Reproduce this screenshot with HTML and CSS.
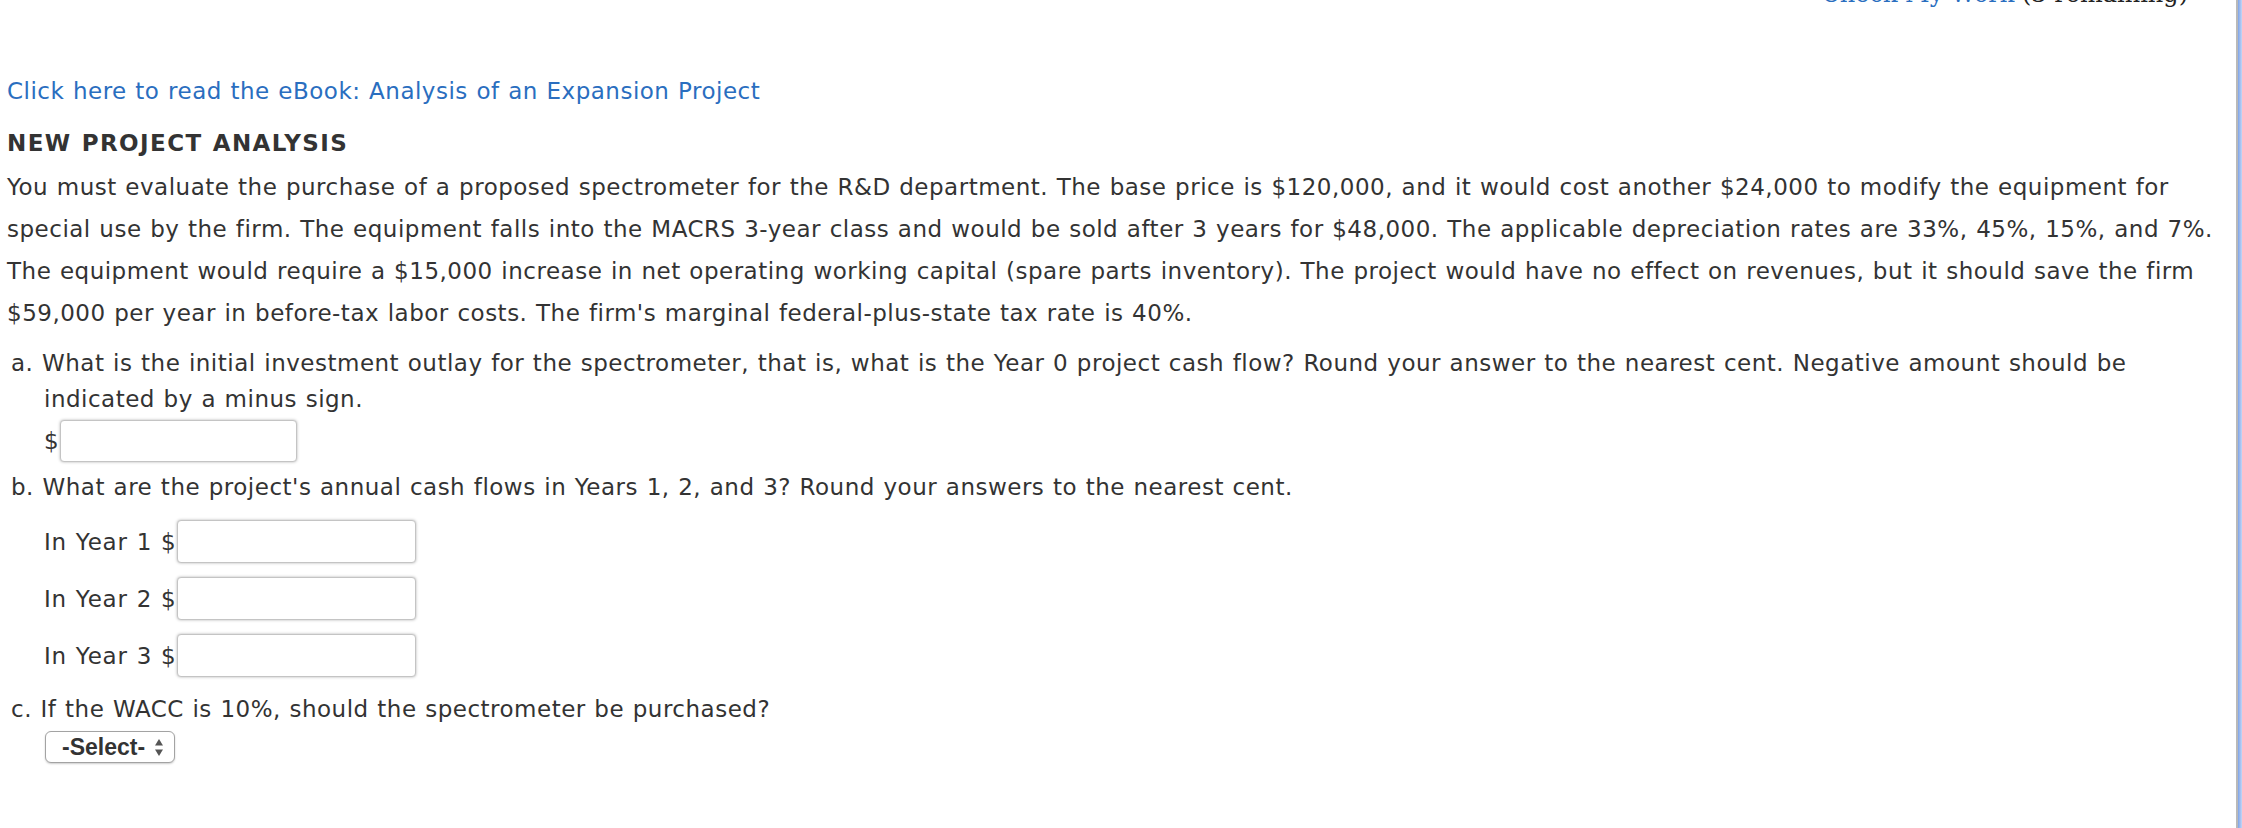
FILE: index.html
```html
<!DOCTYPE html>
<html lang="en">
<head>
<meta charset="utf-8">
<title>New Project Analysis</title>
<link rel="stylesheet" href="styles.css">
</head>
<body>
<div class="page">
  <div class="topbar"><a class="check" href="#">Check My Work</a>&nbsp;<span class="remaining">(3 remaining)</span></div>
  <a class="ebook" href="#">Click here to read the eBook: Analysis of an Expansion Project</a>
  <h1 class="title">NEW PROJECT ANALYSIS</h1>
  <p class="problem">You must evaluate the purchase of a proposed spectrometer for the R&amp;D department. The base price is $120,000, and it would cost another $24,000 to modify the equipment for special use by the firm. The equipment falls into the MACRS 3-year class and would be sold after 3 years for $48,000. The applicable depreciation rates are 33%, 45%, 15%, and 7%. The equipment would require a $15,000 increase in net operating working capital (spare parts inventory). The project would have no effect on revenues, but it should save the firm $59,000 per year in before-tax labor costs. The firm's marginal federal-plus-state tax rate is 40%.</p>

  <div class="questions">
    <div class="q q-a">
      <div class="q-text">a. What is the initial investment outlay for the spectrometer, that is, what is the Year 0 project cash flow? Round your answer to the nearest cent. Negative amount should be indicated by a minus sign.</div>
      <div class="answer answer-a"><span class="cur">$</span><input class="field field-a" type="text"></div>
    </div>
    <div class="q q-b">
      <div class="q-text">b. What are the project's annual cash flows in Years 1, 2, and 3? Round your answers to the nearest cent.</div>
      <div class="years">
        <div class="answer"><span class="cur year-label">In Year 1 $</span><input class="field" type="text"></div>
        <div class="answer"><span class="cur year-label">In Year 2 $</span><input class="field" type="text"></div>
        <div class="answer"><span class="cur year-label">In Year 3 $</span><input class="field" type="text"></div>
      </div>
    </div>
    <div class="q q-c">
      <div class="q-text">c. If the WACC is 10%, should the spectrometer be purchased?</div>
      <div class="select-row">
        <div class="select"><span class="select-label">-Select-</span><svg class="arrows" width="8" height="17" viewBox="0 0 8 17"><path d="M4 0 L8 6.5 L0 6.5 Z" fill="#555"/><path d="M0 10.5 L8 10.5 L4 17 Z" fill="#555"/></svg></div>
      </div>
    </div>
  </div>
</div>
<div class="edge"></div>
</body>
</html>
```

FILE: styles.css
```css
html, body {
  margin: 0;
  padding: 0;
  background: #fff;
}
body {
  display: flex;
  min-height: 100vh;
  font-family: "DejaVu Sans", Verdana, sans-serif;
  font-size: 23px;
  color: #333;
}
.page {
  flex: 1;
  padding: 0 8px 0 7px;
  word-spacing: 0.8px;
  letter-spacing: 0.5px;
}
.edge {
  width: 4px;
  border-left: 2px solid #b9b9b9;
  background: linear-gradient(to right, #7ea4e8, #c3d6f6);
}
.topbar {
  height: 6px;
  display: flex;
  justify-content: flex-end;
  align-items: flex-end;
  padding-right: 40px;
  font-family: "DejaVu Serif", Georgia, serif;
  font-size: 24px;
  line-height: 1;
  color: #222;
  word-spacing: 0;
  letter-spacing: 0;
}
.check {
  color: #2a6ebf;
  text-decoration: none;
}
.ebook {
  display: block;
  margin-top: 70px;
  line-height: 30px;
  color: #2a6ebf;
  text-decoration: none;
}
.title {
  margin: 22px 0 0;
  font-size: 23px;
  line-height: 30px;
  font-weight: bold;
  letter-spacing: 1.4px;
  color: #333;
}
.problem {
  margin: 8px 0 0;
  line-height: 42px;
}
.questions {
  margin-top: 11px;
}
.q {
  padding-left: 37px;
  line-height: 36px;
}
.q-text {
  text-indent: -33px;
}
.q-b {
  margin-top: 7px;
}
.q-c {
  margin-top: 14px;
}
.answer {
  display: flex;
  align-items: center;
}
.answer-a {
  margin-top: 3px;
}
.years {
  margin-top: 15px;
  display: flex;
  flex-direction: column;
  gap: 14px;
}
.cur {
  white-space: pre;
}
.year-label {
  letter-spacing: 0.8px;
}
.field {
  box-sizing: border-box;
  width: 239px;
  height: 43px;
  margin: 0 0 0 1px;
  border: 1px solid #c4c4c4;
  border-radius: 4px;
  box-shadow: 0 0 3px rgba(0, 0, 0, 0.3);
  background: #fff;
  font: inherit;
}
.field-a {
  width: 237px;
  height: 42px;
}
.select-row {
  margin-top: 4px;
  display: flex;
}
.select {
  box-sizing: border-box;
  width: 130px;
  height: 32px;
  margin-left: 1px;
  display: flex;
  align-items: center;
  padding-left: 16px;
  border: 1px solid #a3a3a3;
  border-radius: 6px;
  box-shadow: 0 1px 2px rgba(0, 0, 0, 0.2);
  background: #fff;
}
.select-label {
  font-family: "Liberation Sans", Arial, sans-serif;
  font-weight: bold;
  font-size: 23px;
  line-height: 1;
  color: #333;
  word-spacing: 0;
  letter-spacing: 0;
}
.arrows {
  margin-left: 10px;
}
```
